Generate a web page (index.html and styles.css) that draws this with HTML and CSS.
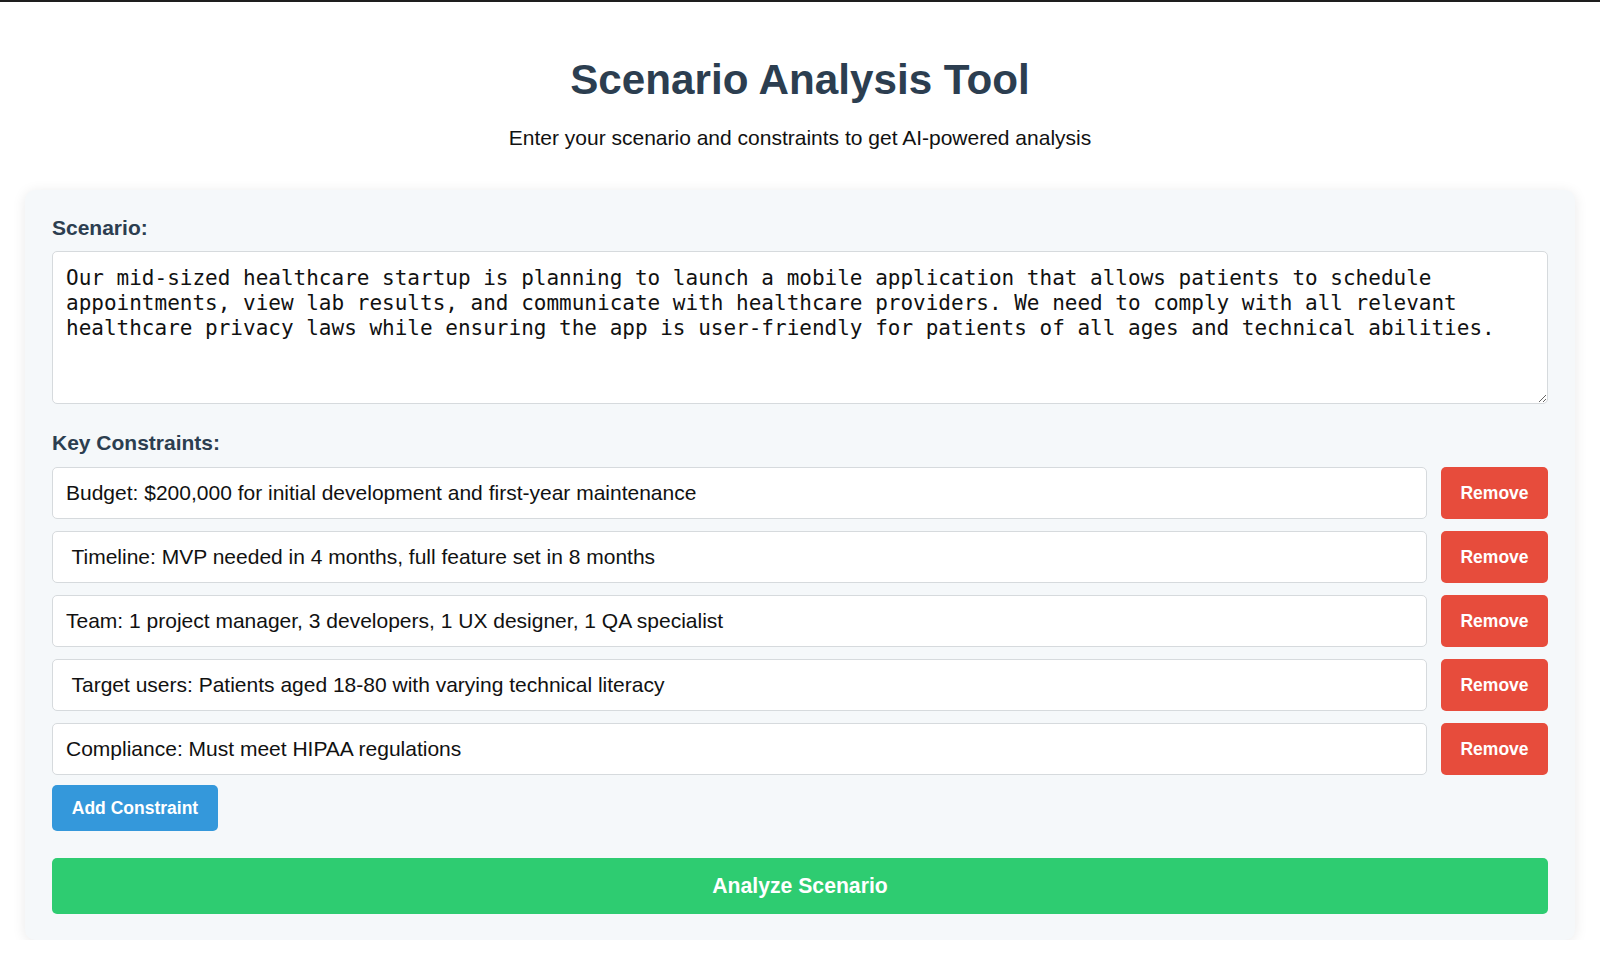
FILE: index.html
```html
<!DOCTYPE html>
<html lang="en">
<head>
<meta charset="utf-8">
<title>Scenario Analysis Tool</title>
<link rel="stylesheet" href="styles.css">
</head>
<body>
<div class="topbar"></div>
<main class="page">
  <header class="header">
    <h1 class="title">Scenario Analysis Tool</h1>
    <p class="subtitle">Enter your scenario and constraints to get AI-powered analysis</p>
  </header>
  <section class="card">
    <label class="label" for="scenario">Scenario:</label>
    <textarea id="scenario" class="scenario">Our mid-sized healthcare startup is planning to launch a mobile application that allows patients to schedule appointments, view lab results, and communicate with healthcare providers. We need to comply with all relevant healthcare privacy laws while ensuring the app is user-friendly for patients of all ages and technical abilities.</textarea>
    <div class="label label-constraints">Key Constraints:</div>
    <div class="constraints">
      <div class="row">
        <input class="field" type="text" value="Budget: $200,000 for initial development and first-year maintenance">
        <button class="btn btn-remove">Remove</button>
      </div>
      <div class="row">
        <input class="field" type="text" value=" Timeline: MVP needed in 4 months, full feature set in 8 months">
        <button class="btn btn-remove">Remove</button>
      </div>
      <div class="row">
        <input class="field" type="text" value="Team: 1 project manager, 3 developers, 1 UX designer, 1 QA specialist">
        <button class="btn btn-remove">Remove</button>
      </div>
      <div class="row">
        <input class="field" type="text" value=" Target users: Patients aged 18-80 with varying technical literacy">
        <button class="btn btn-remove">Remove</button>
      </div>
      <div class="row">
        <input class="field" type="text" value="Compliance: Must meet HIPAA regulations">
        <button class="btn btn-remove">Remove</button>
      </div>
    </div>
    <button class="btn btn-add">Add Constraint</button>
    <button class="btn btn-analyze">Analyze Scenario</button>
  </section>
</main>
</body>
</html>
```
FILE: styles.css
```css
html, body {
  margin: 0;
  padding: 0;
  background: #ffffff;
}

body {
  font-family: "Liberation Sans", Arial, sans-serif;
  color: #222;
}

.topbar {
  height: 2px;
  background: #1e1e1e;
}

.page {
  padding: 0 25px;
}

.header {
  text-align: center;
}

.title {
  margin: 53px 0 0;
  font-size: 42.2px;
  line-height: 50px;
  font-weight: bold;
  color: #2c3e50;
}

.subtitle {
  margin: 21px 0 0;
  font-size: 21px;
  line-height: 24px;
  color: #111;
}

.card {
  margin-top: 40px;
  background: #f5f8fa;
  border-radius: 10px;
  box-shadow: 0 2px 14px rgba(0, 0, 0, 0.09);
  padding: 27px 27px 26px;
  display: flex;
  flex-direction: column;
}

.label {
  display: block;
  font-size: 21px;
  line-height: 22px;
  font-weight: bold;
  color: #2c3e50;
  margin-bottom: 12px;
}

.label-constraints {
  margin-top: 28px;
  margin-bottom: 13px;
}

.scenario {
  box-sizing: border-box;
  width: 100%;
  height: 153px;
  padding: 14px 13px 12px;
  border: 1px solid #d6dadd;
  border-radius: 5px;
  background: #fff;
  font-family: "DejaVu Sans Mono", monospace;
  font-size: 21px;
  line-height: 25px;
  color: #111;
  resize: vertical;
  margin: 0;
}

.constraints {
  display: flex;
  flex-direction: column;
  gap: 12px;
}

.row {
  display: flex;
  gap: 14px;
}

.field {
  flex: 1;
  box-sizing: border-box;
  height: 52px;
  padding: 0 13px;
  border: 1px solid #d6dadd;
  border-radius: 5px;
  background: #fff;
  font-family: "Liberation Sans", Arial, sans-serif;
  font-size: 21px;
  color: #111;
  margin: 0;
}

.btn {
  font-family: "Liberation Sans", Arial, sans-serif;
  font-weight: bold;
  color: #fff;
  border: none;
  border-radius: 5px;
  cursor: pointer;
  margin: 0;
}

.btn-remove {
  width: 107px;
  height: 52px;
  background: #e74c3c;
  font-size: 17.5px;
}

.btn-add {
  align-self: flex-start;
  margin-top: 10px;
  width: 166px;
  height: 46px;
  background: #3498db;
  font-size: 17.5px;
}

.btn-analyze {
  margin-top: 27px;
  width: 100%;
  height: 56px;
  background: #2ecc71;
  font-size: 21.2px;
}
```
